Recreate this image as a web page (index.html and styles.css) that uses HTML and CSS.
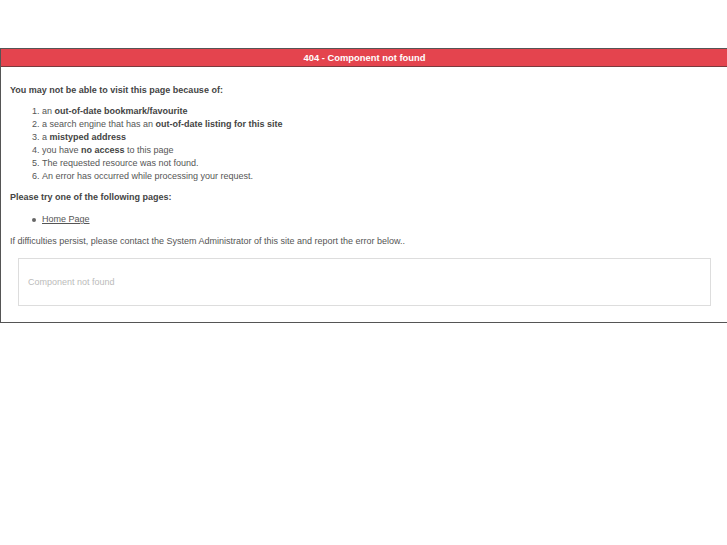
FILE: index.html
```html
<html>

<head>
    <link rel="stylesheet" href="styles.css">
</head>

<body>
    <div class="error-box">
        <div class="error-title">404 - Component not found</div>
        <div class="error-body">
            <p class="lead">You may not be able to visit this page because of:</p>
            <ol class="reasons">
                <li>an <b>out-of-date bookmark/favourite</b></li>
                <li>a search engine that has an <b>out-of-date listing for this site</b></li>
                <li>a <b>mistyped address</b></li>
                <li>you have <b>no access</b> to this page</li>
                <li>The requested resource was not found.</li>
                <li>An error has occurred while processing your request.</li>
            </ol>
            <p class="lead">Please try one of the following pages:</p>
            <ul class="pages">
                <li><a href="#">Home Page</a></li>
            </ul>
            <p class="note">If difficulties persist, please contact the System Administrator of this site and report the error below..</p>
            <div class="error-msg">Component not found</div>
        </div>
    </div>
</body>

</html>
```

FILE: styles.css
```css
html,
body {
    margin: 0;
    padding: 0;
    overflow: hidden;
    background: #fff;
}

body {
    font-family: "Liberation Sans", Arial, sans-serif;
    font-size: 9px;
    line-height: 13px;
    color: #555;
}

.error-box {
    margin-top: 48px;
    width: 100%;
    border: 1px solid #555;
}

.error-title {
    height: 17px;
    line-height: 17px;
    background: #e4444e;
    border-bottom: 1px solid #7a3a3e;
    color: #fff;
    font-size: 9.4px;
    font-weight: bold;
    text-align: center;
}

.error-body {
    padding: 17px 9px 16px 9px;
}

.lead {
    margin: 0 0 8px 0;
    font-weight: bold;
    color: #444;
}

.reasons {
    margin: 0 0 8px 0;
    padding-left: 32px;
}

.reasons b {
    color: #444;
}

.pages {
    margin: 9px 0 9px 0;
    padding-left: 32px;
    list-style: none;
}

.pages li {
    position: relative;
}

.pages li::before {
    content: "";
    position: absolute;
    left: -10px;
    top: 5px;
    width: 4px;
    height: 4px;
    border-radius: 50%;
    background: #666;
}

.pages a {
    color: #555;
}

.note {
    margin: 0 0 10px 0;
}

.error-msg {
    margin: 0 8px;
    height: 46px;
    line-height: 46px;
    border: 1px solid #ddd;
    padding-left: 9px;
    color: #bbb;
}
```
